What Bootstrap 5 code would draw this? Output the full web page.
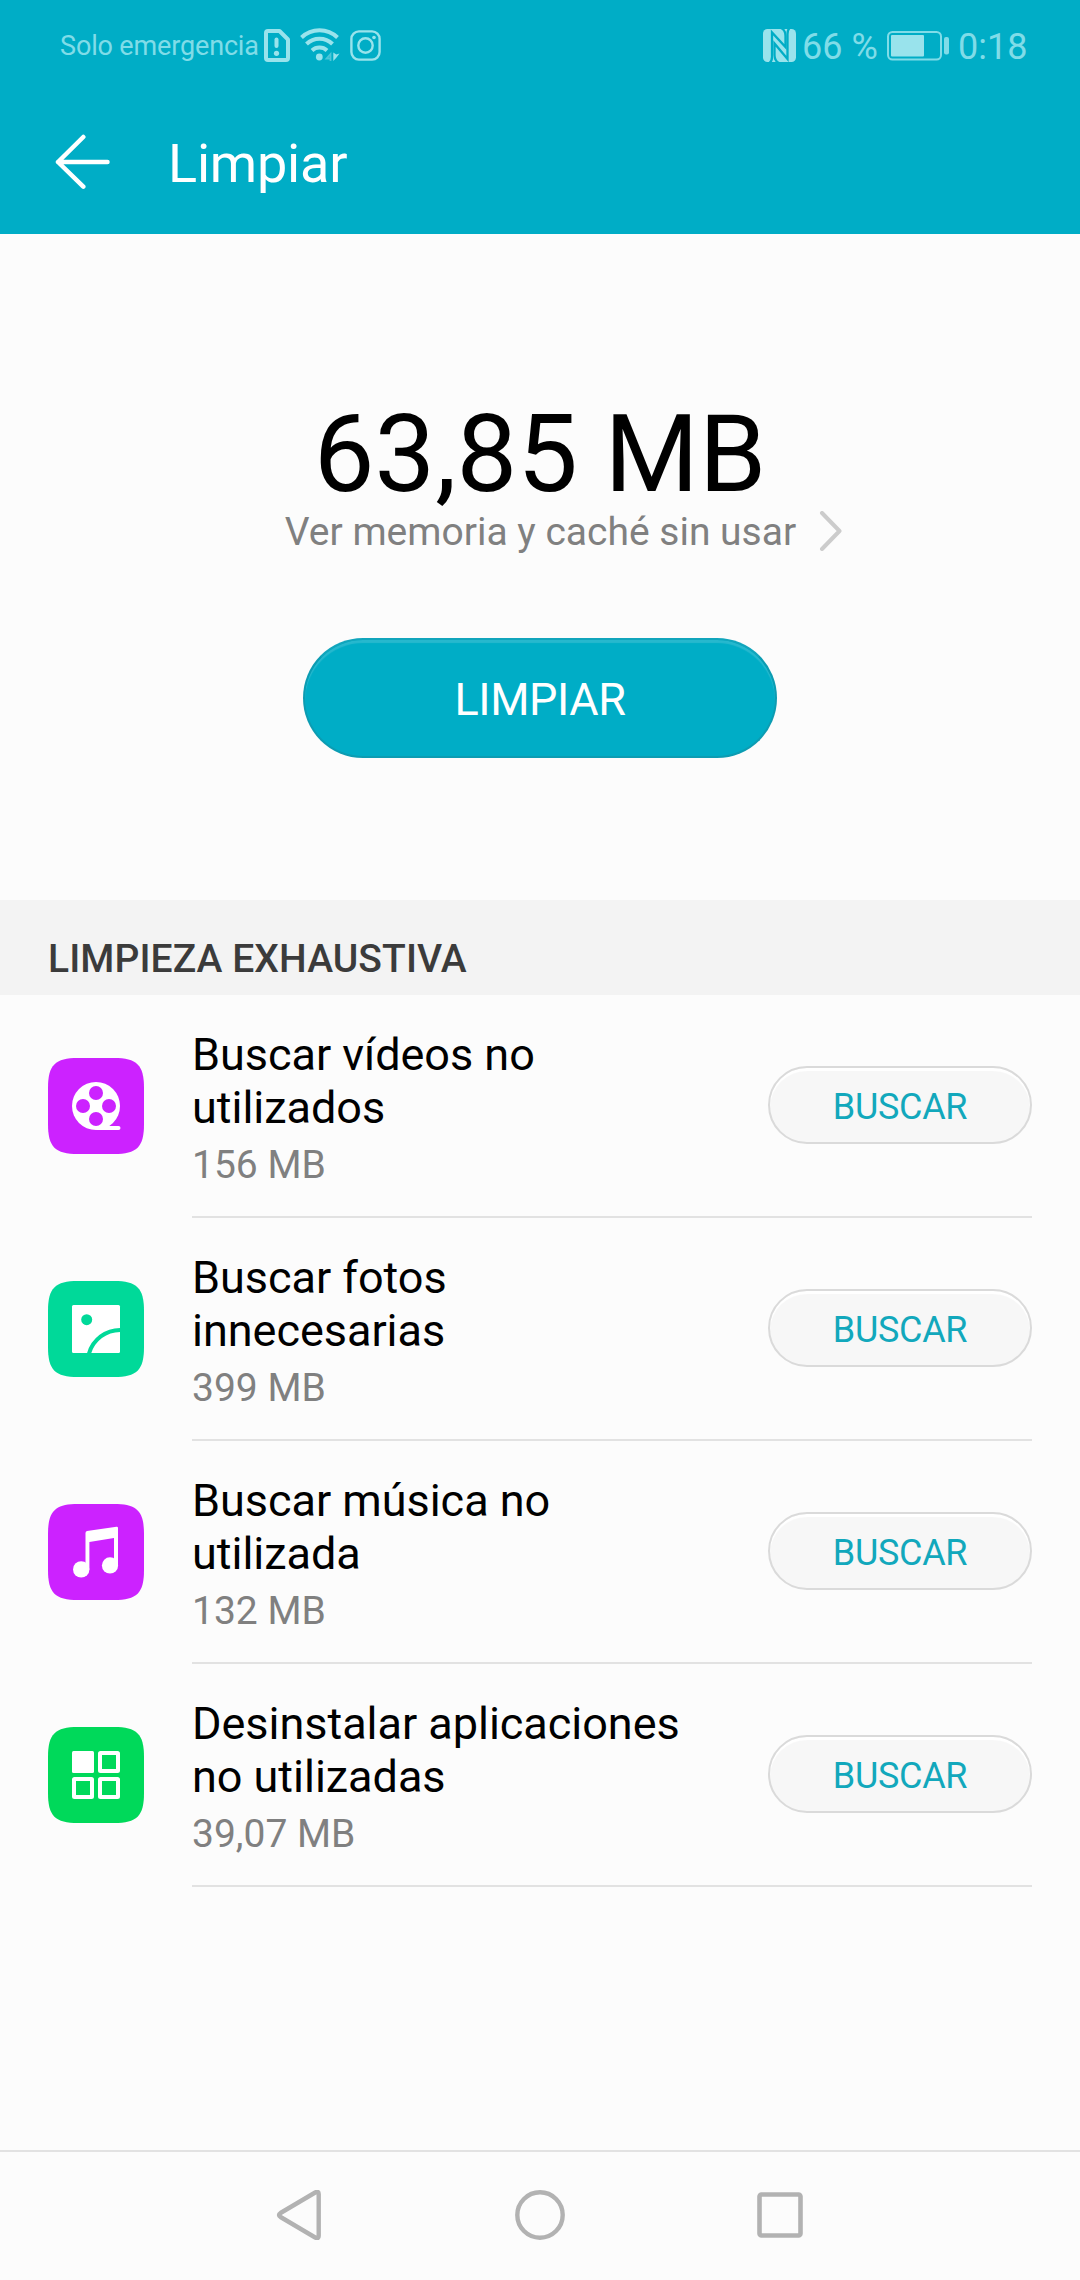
<!DOCTYPE html>
<html lang="es">
<head>
<meta charset="utf-8">
<meta name="viewport" content="width=device-width, initial-scale=1">
<title>Limpiar</title>
<link rel="stylesheet" href="https://cdn.jsdelivr.net/npm/bootstrap@5.3.0/dist/css/bootstrap.min.css">
<style>
  :root { --teal: #00adc6; --page: #fcfcfc; --line: #e2e2e2; }
  body { font-family: Roboto, "Noto Sans", sans-serif; background: var(--page); color: #000; height: 2280px; overflow: hidden; }
  svg { display: block; flex-shrink: 0; }
  .app-head { background: var(--teal); height: 234px; }
  .status-row { height: 90px; padding: 0 47px 0 60px; color: #80dce8; }
  .status-left { font-size: 27px; line-height: 32px; }
  .status-right { font-size: 36px; line-height: 42px; }
  .carrier { width: 199px; margin-right: 5px; padding-top: 1px; white-space: nowrap; letter-spacing: -.15px; }
  .insta-icon { margin-left: 9px; }
  .battery-text { width: 83px; margin-left: 6px; padding-top: 3px; white-space: nowrap; }
  .battery-icon { margin-left: 2px; margin-top: 1px; }
  .clock-text { width: 75px; margin-left: 8px; padding-top: 3px; white-space: nowrap; }
  .title-row { height: 144px; padding: 0 0 0 54px; }
  .back-icon { margin-top: 44px; }
  .title-row h1 { font-size: 54px; line-height: 64px; margin: 38px 0 0 56px; padding-top: 4px; font-weight: 400; letter-spacing: -.2px; }
  .summary { height: 666px; padding-top: 166px; }
  .total { font-size: 108px; line-height: 108px; }
  .sub-link { font-size: 39px; line-height: 46px; color: #808080; padding: 1px 0 0 48px; }
  .chevron { margin-left: 23px; margin-top: -3px; }
  .btn-clean { width: 474px; height: 120px; margin-top: 83px; padding: 4px 0 0; font-size: 45px; letter-spacing: -.4px; color: #fff; background: var(--teal); border: 2px solid #0c9cb2; border-top-color: #11a5bc; box-shadow: inset 0 3px 1px #26b8ce; }
  .section-title { height: 95px; background: #f3f3f3; color: #3b3b3b; font-size: 39px; line-height: 46px; font-weight: 500; padding: 36px 48px 0; margin: 0; letter-spacing: .08px; }
  .clean-row { height: 223px; padding: 0 48px; }
  .row-icon { margin-top: 63px; }
  .clean-body { height: 223px; margin-left: 48px; border-bottom: 2px solid var(--line); padding-top: 33px; }
  .clean-name { font-size: 45px; line-height: 53px; width: 520px; font-weight: 400; letter-spacing: -.03px; }
  .clean-size { font-size: 39px; line-height: 46px; color: #808080; margin-top: 8px; }
  .btn-search { width: 264px; height: 78px; margin-top: 38px; padding: 4px 0 0; font-size: 36px; line-height: 42px; letter-spacing: -.3px; color: #12a8bc; background: #f7f7f7; border: 2px solid #dadada; box-shadow: inset 0 3px 1px #fff; }
  .nav-keys { height: 130px; border-top: 2px solid #e2e2e2; gap: 190px; padding-bottom: 2px; }
</style>
</head>
<body class="d-flex flex-column">
<header class="app-head">
  <div class="status-row d-flex justify-content-between align-items-center">
    <div class="status-left d-flex align-items-center">
      <span class="carrier">Solo emergencia</span>
      <svg width="26" height="33" viewBox="0 0 26 33" fill="none" stroke="#99e3ec" stroke-width="4"><path d="M4 2H15.500L24 10.500V29q0 2-2 2H4q-2 0-2-2V4q0-2 2-2Z" stroke-linejoin="round"/><path d="M12.500 10.500V17" stroke-linecap="round"/><circle cx="12.500" cy="24.300" r="2.600" fill="#99e3ec" stroke="none"/></svg>
      <svg class="ms-2" width="43" height="36" viewBox="298 27 43 36" fill="none" stroke="#99e3ec" stroke-width="4"><path d="M301.500 37.500A26 26 0 0 1 337.500 37.500"/><path d="M306.500 44A18.500 18.500 0 0 1 332.500 44"/><path d="M312 50.500A11 11 0 0 1 327 50.500"/><circle cx="319.300" cy="57" r="3.400" fill="#99e3ec" stroke="none"/><path d="M330.500 61V54L326.500 58.500H331" stroke="#4cc6d8" stroke-width="1.800"/><path d="M333.300 52.500V61L336.500 57.500L339.500 53.500L336.300 54.500Z" fill="#99e3ec" stroke="none"/></svg>
      <svg class="insta-icon" width="31" height="31" viewBox="0 0 31 31" fill="none" stroke="#99e3ec" stroke-width="2.400"><rect x="1.400" y="1.400" width="28.200" height="28.200" rx="7.500"/><circle cx="15.500" cy="15.500" r="7.200"/><circle cx="24" cy="7.500" r="1.800" fill="#99e3ec" stroke="none"/></svg>
    </div>
    <div class="status-right d-flex align-items-center">
      <svg width="33" height="33" viewBox="0 0 33 33"><rect width="33" height="33" rx="4.500" fill="#99e3ec"/><g fill="none" stroke="#00adc6" stroke-width="2.300"><path d="M6.500 34Q9 32 9 28V3.500L22.500 18V7Q22.500 1 18 -1"/><path d="M26.500 -1Q24.500 1 24.500 5V30L11.500 14.500V26Q11.500 32 16 34"/></g></svg>
      <span class="battery-text">66 %</span>
      <svg class="battery-icon" width="63" height="30" viewBox="0 0 63 30"><rect x="1" y="1" width="53" height="27.500" rx="4.500" fill="none" stroke="#80dce8" stroke-width="2"/><rect x="4" y="4" width="33" height="21.500" rx="1" fill="#99e3ec"/><rect x="57" y="6" width="5" height="17.500" rx="2" fill="#80dce8"/></svg>
      <span class="clock-text">0:18</span>
    </div>
  </div>
  <div class="title-row d-flex align-items-start text-white">
    <svg class="back-icon" width="58" height="56" viewBox="0 0 58 56" fill="none" stroke="#fff" stroke-width="4.500" stroke-linecap="round" stroke-linejoin="round"><path d="M29.300 3L4 28L29.300 52.700M4 28H53.500" /></svg>
    <h1>Limpiar</h1>
  </div>
</header>

<main class="flex-grow-1">
  <section class="summary d-flex flex-column align-items-center">
    <div class="total">63,85 MB</div>
    <a class="sub-link d-flex align-items-center text-decoration-none" href="#">
      <span>Ver memoria y caché sin usar</span>
      <svg class="chevron" width="24" height="40" viewBox="0 0 24 40" fill="none" stroke="#ccc" stroke-width="4" stroke-linecap="round" stroke-linejoin="round"><path d="M3 2L20.500 20L3 38"/></svg>
    </a>
    <button class="btn btn-clean rounded-pill" type="button">LIMPIAR</button>
  </section>

  <h2 class="section-title">LIMPIEZA EXHAUSTIVA</h2>

  <div class="clean-row d-flex">
    <svg class="row-icon" width="96" height="96" viewBox="0 0 96 96"><path d="M0 30C0 7 7 0 30 0H66C89 0 96 7 96 30V66C96 89 89 96 66 96H30C7 96 0 89 0 66Z" fill="#cc22ff"/><circle cx="48" cy="48" r="24" fill="#fff"/><path d="M48 72H70.500a2 2 0 0 0 0-4H61L54 65Z" fill="#fff"/><g fill="#cc22ff"><circle cx="48" cy="35" r="7"/><circle cx="48" cy="61" r="7"/><circle cx="35" cy="48" r="7"/><circle cx="61" cy="48" r="7"/></g></svg>
    <div class="clean-body flex-grow-1 d-flex justify-content-between">
      <div><h3 class="clean-name m-0">Buscar vídeos no<br>utilizados</h3><div class="clean-size">156 MB</div></div>
      <button class="btn btn-search rounded-pill" type="button">BUSCAR</button>
    </div>
  </div>

  <div class="clean-row d-flex">
    <svg class="row-icon" width="96" height="96" viewBox="0 0 96 96"><path d="M0 30C0 7 7 0 30 0H66C89 0 96 7 96 30V66C96 89 89 96 66 96H30C7 96 0 89 0 66Z" fill="#00d999"/><rect x="24" y="24" width="48" height="48" rx="1.500" fill="#fff"/><circle cx="38.700" cy="38.700" r="5.500" fill="#00d999"/><path d="M72.500 49A32.400 32.400 0 0 0 41 72.500" fill="none" stroke="#00d999" stroke-width="4"/></svg>
    <div class="clean-body flex-grow-1 d-flex justify-content-between">
      <div><h3 class="clean-name m-0">Buscar fotos<br>innecesarias</h3><div class="clean-size">399 MB</div></div>
      <button class="btn btn-search rounded-pill" type="button">BUSCAR</button>
    </div>
  </div>

  <div class="clean-row d-flex">
    <svg class="row-icon" width="96" height="96" viewBox="0 0 96 96"><path d="M0 30C0 7 7 0 30 0H66C89 0 96 7 96 30V66C96 89 89 96 66 96H30C7 96 0 89 0 66Z" fill="#cc22ff"/><g fill="#fff"><path d="M37.500 60V29Q37.500 27.300 39 27L68.500 22.700Q70 22.500 70 24V61.500H66V34L41.400 38V65.500H37.500Z"/><circle cx="33.200" cy="65.400" r="8.200"/><circle cx="62" cy="61.400" r="8.100"/></g></svg>
    <div class="clean-body flex-grow-1 d-flex justify-content-between">
      <div><h3 class="clean-name m-0">Buscar música no<br>utilizada</h3><div class="clean-size">132 MB</div></div>
      <button class="btn btn-search rounded-pill" type="button">BUSCAR</button>
    </div>
  </div>

  <div class="clean-row d-flex">
    <svg class="row-icon" width="96" height="96" viewBox="0 0 96 96"><path d="M0 30C0 7 7 0 30 0H66C89 0 96 7 96 30V66C96 89 89 96 66 96H30C7 96 0 89 0 66Z" fill="#00d95a"/><rect x="24" y="24" width="22" height="22" rx="1.500" fill="#fff"/><g fill="none" stroke="#fff" stroke-width="4"><rect x="52" y="26" width="18" height="18" rx=".5"/><rect x="26" y="52" width="18" height="18" rx=".5"/><rect x="52" y="52" width="18" height="18" rx=".5"/></g></svg>
    <div class="clean-body flex-grow-1 d-flex justify-content-between">
      <div><h3 class="clean-name m-0">Desinstalar aplicaciones<br>no utilizadas</h3><div class="clean-size">39,07 MB</div></div>
      <button class="btn btn-search rounded-pill" type="button">BUSCAR</button>
    </div>
  </div>
</main>

<nav class="nav-keys d-flex justify-content-center align-items-center">
  <svg width="50" height="50" viewBox="-3 0 50 50" fill="none" stroke="#b2b2b2" stroke-width="4.400" stroke-linejoin="round"><path d="M37.200 2.500Q40.700 .5 40.700 4V46Q40.700 49.500 37.200 47.500L2.500 27Q-.5 25 2.500 23Z"/></svg>
  <svg width="50" height="50" viewBox="0 0 50 50" fill="none" stroke="#b2b2b2" stroke-width="4.400"><circle cx="25" cy="25" r="22.700"/></svg>
  <svg width="50" height="50" viewBox="0 0 50 50" fill="none" stroke="#b2b2b2" stroke-width="4.600"><rect x="4.500" y="4.500" width="41" height="41" rx="2"/></svg>
</nav>
<script src="https://cdn.jsdelivr.net/npm/bootstrap@5.3.0/dist/js/bootstrap.bundle.min.js"></script>
</body>
</html>
